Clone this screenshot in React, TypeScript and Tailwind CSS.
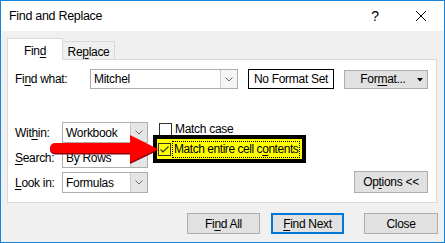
import React from "react";

function U({ children }: { children: React.ReactNode }) {
  return <span className="underline underline-offset-[2px] decoration-1">{children}</span>;
}

function Chevron() {
  return (
    <svg width="8" height="5" viewBox="0 0 8 5">
      <path d="M0.5 0.5 L4 4 L7.5 0.5" fill="none" stroke="#6d6d6d" strokeWidth="1" />
    </svg>
  );
}

function Combo({ value, width, grayBtn }: { value: string; width: string; grayBtn?: boolean }) {
  return (
    <div className={`${width} h-full flex bg-white border border-[#adadad]`}>
      <div className="flex-1 flex items-center pl-[3px] text-[#000]">{value}</div>
      <div
        className={`w-[17px] h-full flex items-center justify-center border-l border-[#c9c9c9] ${
          grayBtn ? "bg-[#e5e5e5]" : "bg-[#f5f5f5]"
        }`}
      >
        <Chevron />
      </div>
    </div>
  );
}

function Checkbox({ checked }: { checked?: boolean }) {
  return (
    <div className="w-[13px] h-[13px] shrink-0 border border-[#333] bg-transparent flex items-center justify-center">
      {checked && (
        <svg width="11" height="11" viewBox="0 0 11 11">
          <path d="M1.5 5.5 L4 8 L9.5 2.5" fill="none" stroke="#333" strokeWidth="1.2" />
        </svg>
      )}
    </div>
  );
}

function Btn({ children, className }: { children: React.ReactNode; className: string }) {
  return (
    <div className={`flex items-center justify-center bg-[#e1e1e1] ${className}`}>{children}</div>
  );
}

export default function App() {
  return (
    <div className="relative w-[445px] h-[243px] flex flex-col border border-[#1883d7] bg-[#f0f0f0] font-['Liberation_Sans',Arial,sans-serif] text-[12px] tracking-[-0.3px] text-black overflow-hidden">
      {/* title bar */}
      <div className="h-[30px] bg-white flex items-center pl-[8px]">
        <span className="text-[12.5px]">Find and Replace</span>
        <div className="ml-auto flex h-full">
          <div className="w-[46px] h-full flex items-center justify-center text-[14px]">?</div>
          <div className="w-[46px] h-full flex items-center justify-center">
            <svg width="10" height="10" viewBox="0 0 10 10">
              <path d="M0 0 L10 10 M10 0 L0 10" stroke="#000" strokeWidth="1" />
            </svg>
          </div>
        </div>
      </div>

      {/* body */}
      <div className="flex-1 flex flex-col pl-[6px] pt-[7px]">
        <div className="flex h-[21px] items-end">
          <div className="relative z-10 w-[56px] h-[22px] -mb-px bg-white border border-b-0 border-[#d9d9d9] flex items-center justify-center pt-[2px]">
            Fin<U>d</U>
          </div>
          <div className="w-[52px] h-[18px] border border-l-0 border-b-0 border-[#d9d9d9] flex items-center justify-center pt-[2px]">
            Re<U>p</U>lace
          </div>
        </div>

        <div className="w-[430px] h-[144px] bg-white border border-[#d9d9d9] flex flex-col pl-[7px] pt-[9px]">
          <div className="flex items-center h-[20px]">
            <div className="w-[75px]">
              Fi<U>n</U>d what:
            </div>
            <Combo value="Mitchel" width="w-[148px]" />
            <div className="ml-[10px] w-[86px] h-[20px] border border-black flex items-center justify-center">
              No Format Set
            </div>
            <Btn className="ml-[10px] w-[84px] h-[19px] border border-[#adadad] relative">
              <span className="pr-[6px]">
                For<U>m</U>at...
              </span>
              <svg className="absolute right-[4px] top-[7px]" width="6" height="4" viewBox="0 0 6 4">
                <path d="M0 0 L6 0 L3 3.5 Z" fill="#000" />
              </svg>
            </Btn>
          </div>

          <div className="flex mt-[33px] pr-[8px]">
            <div className="flex flex-col gap-[4px]">
              <div className="flex items-center h-[21px]">
                <div className="w-[47px]">
                  Wit<U>h</U>in:
                </div>
                <Combo value="Workbook" width="w-[86px]" grayBtn />
              </div>
              <div className="flex items-center h-[21px]">
                <div className="w-[47px]">
                  <U>S</U>earch:
                </div>
                <Combo value="By Rows" width="w-[86px]" grayBtn />
              </div>
              <div className="flex items-center h-[21px]">
                <div className="w-[47px]">
                  <U>L</U>ook in:
                </div>
                <Combo value="Formulas" width="w-[86px]" grayBtn />
              </div>
            </div>

            <div className="ml-[5px] flex flex-col">
              <div className="h-[13px] mt-[1px] pl-[6px] flex items-center gap-[3px]">
                <Checkbox />
                <span className="leading-[13px] -mt-[1px] whitespace-nowrap">Match case</span>
              </div>
              <div className="-mt-[1px] w-[153px] h-[28px] border-4 border-black bg-[#ffff00] flex items-center pl-[1px] whitespace-nowrap">
                <Checkbox checked />
                <span className="ml-[1px] shrink-0 border border-dotted border-black px-[1px] leading-[15px] tracking-[-0.45px]">
                  Match entire cell c<U>o</U>ntents
                </span>
              </div>
            </div>

            <Btn className="ml-auto self-end w-[74px] h-[22px] border border-[#adadad]">
              Op<U>t</U>ions &lt;&lt;
            </Btn>
          </div>
        </div>

        <div className="flex justify-end mt-[10px] pr-[6px]">
          <Btn className="w-[73px] h-[21px] border border-[#adadad]">
            Fi<U>n</U>d All
          </Btn>
          <Btn className="ml-[11px] w-[73px] h-[21px] border-2 border-[#0078d7]">
            <U>F</U>ind Next
          </Btn>
          <Btn className="ml-[20px] w-[74px] h-[21px] border border-[#adadad]">Close</Btn>
        </div>
      </div>

      {/* red arrow callout */}
      <svg className="absolute left-[49px] top-[134px]" width="112" height="30" viewBox="0 0 112 30">
        <path d="M5 9.5 L80 9.5 L80 1.5 L108 15.5 L80 29 L80 19.5 L5 19.5 A5 5 0 0 1 5 9.5 Z" fill="#8a0000" />
        <path d="M5 8 L80 8 L80 0 L108 14 L80 27.5 L80 18 L5 18 A5 5 0 0 1 5 8 Z" fill="#ff0000" />
      </svg>
    </div>
  );
}
